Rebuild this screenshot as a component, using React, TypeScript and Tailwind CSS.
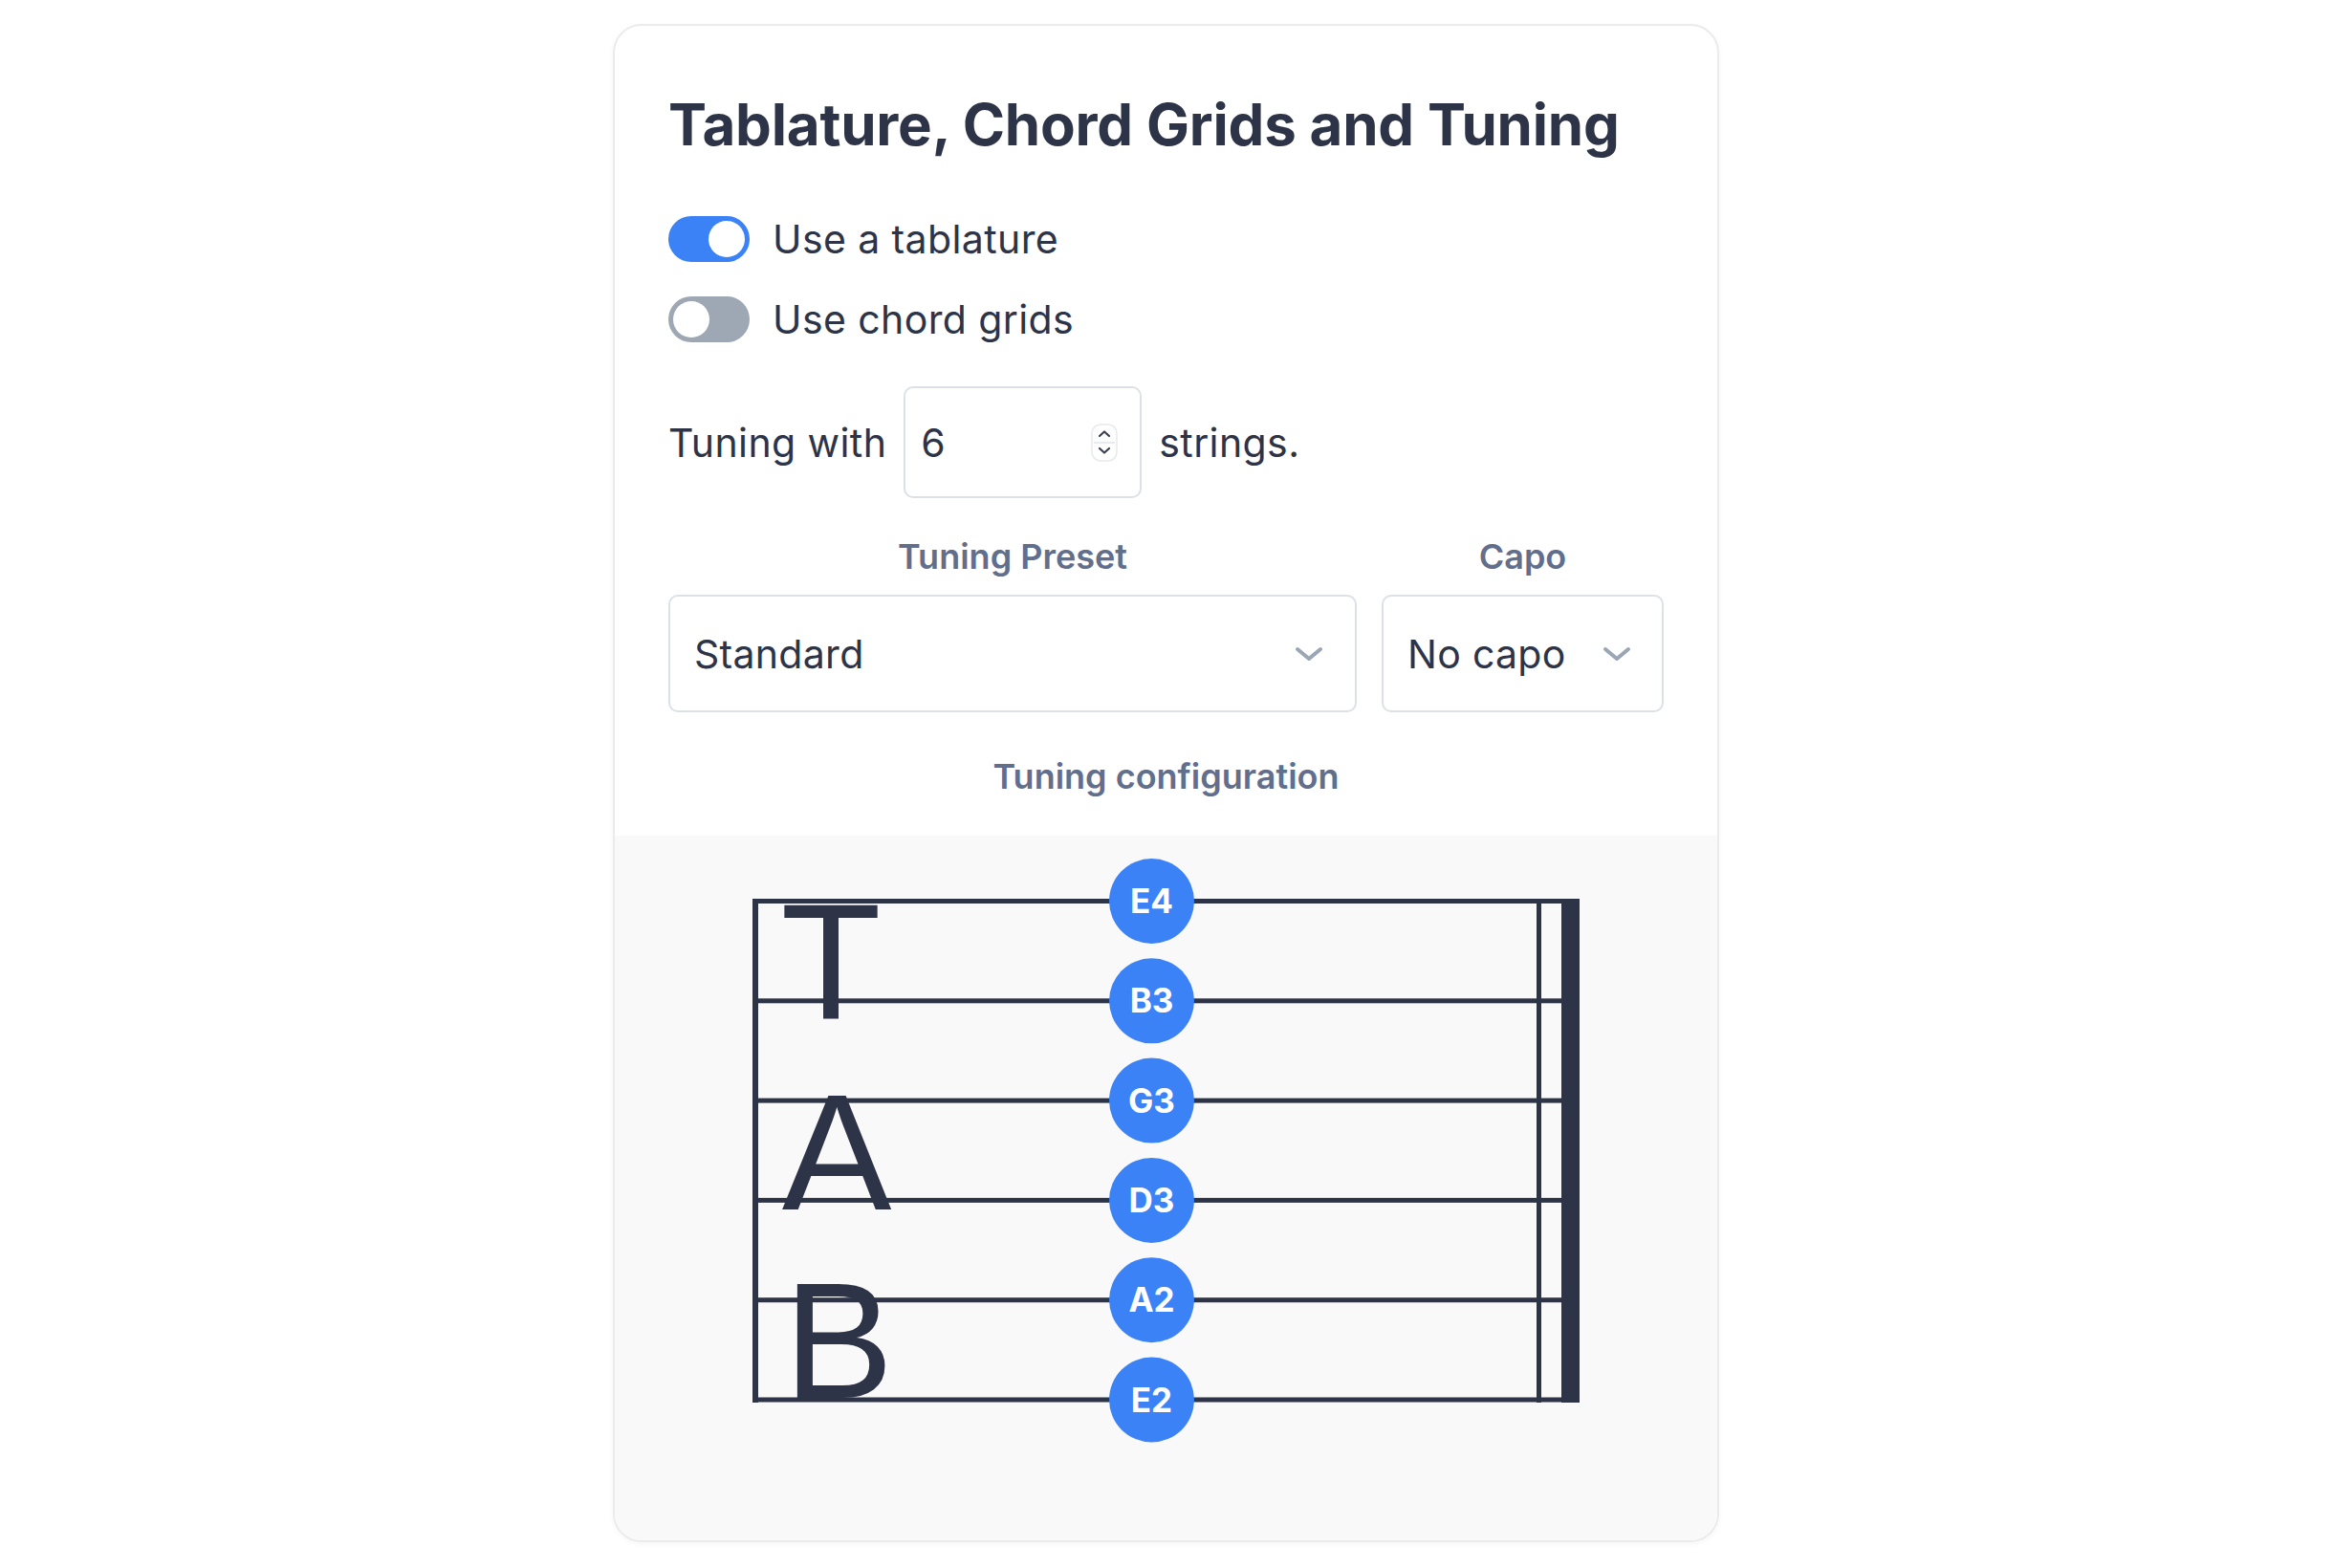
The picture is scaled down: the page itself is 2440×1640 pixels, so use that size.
import { useState } from "react";

const strings = ["E4", "B3", "G3", "D3", "A2", "E2"];

function Toggle({ on }: { on: boolean }) {
    return (
        <div
            className={`flex h-[48px] w-[85px] shrink-0 items-center rounded-full p-[5px] ${on ? "justify-end bg-[#3b82f6]" : "justify-start bg-[#9ea8b4]"}`}
        >
            <div className="h-[38px] w-[38px] rounded-full bg-white" />
        </div>
    );
}

function Chevron() {
    return (
        <svg width="30" height="16" viewBox="0 0 30 16" fill="none">
            <polyline points="3,3 15,13 27,3" stroke="#9aa5b5" strokeWidth="4" strokeLinecap="round" strokeLinejoin="round" />
        </svg>
    );
}

function Spinner() {
    return (
        <svg width="28" height="40" viewBox="0 0 28 40" fill="none">
            <rect x="1" y="1" width="26" height="38" rx="9" fill="#ffffff" stroke="#e6e9ed" strokeWidth="1.5" />
            <line x1="3" y1="20" x2="25" y2="20" stroke="#e2e6ea" strokeWidth="1.5" />
            <polyline points="9,13 14,8.5 19,13" stroke="#3a4050" strokeWidth="2.2" strokeLinecap="round" strokeLinejoin="round" />
            <polyline points="9,26 14,30.5 19,26" stroke="#3a4050" strokeWidth="2.2" strokeLinecap="round" strokeLinejoin="round" />
        </svg>
    );
}

function TabStaff() {
    const lineY = strings.map((_, i) => 68.5 + i * 104.3);
    const ink = "#2e3447";
    return (
        <svg width="1153" height="737" viewBox="0 0 1153 737">
            {lineY.map((y) => (
                <rect key={y} x={144} y={y - 2.5} width={865} height={5} fill={ink} />
            ))}
            <rect x={144} y={66} width={6} height={527} fill={ink} />
            <rect x={964} y={66} width={5} height={527} fill={ink} />
            <rect x={990} y={66} width={19} height={527} fill={ink} />
            <g fill={ink} fontFamily="'Liberation Sans', Arial, sans-serif" fontSize="172" textAnchor="middle">
                <text x={226} y={192}>T</text>
                <text x={232} y={391}>A</text>
                <text x={234} y={588}>B</text>
            </g>
            {strings.map((s, i) => (
                <g key={s}>
                    <circle cx={561.5} cy={lineY[i]} r={44.5} fill="#3b82f6" />
                    <text
                        x={561.5}
                        y={lineY[i] + 12.6}
                        fill="#ffffff"
                        fontFamily="Inter, 'Noto Sans', sans-serif"
                        fontWeight="700"
                        fontSize="35"
                        textAnchor="middle"
                    >
                        {s}
                    </text>
                </g>
            ))}
        </svg>
    );
}

export default function App() {
    const [tab] = useState(true);
    const [grids] = useState(false);

    return (
        <div className="min-h-screen bg-white pt-[25px] font-['Inter',_'Noto_Sans',_sans-serif] text-[#2e3447]">
            <div className="ml-[641px] w-[1157px] overflow-hidden rounded-[30px] border-2 border-[#ebebeb] bg-white shadow-[0_2px_6px_rgba(0,0,0,0.04)]">
                <div className="pt-[67px] pb-[38px] pl-[56px] pr-[56px]">
                    <h1 className="text-[60px] font-bold leading-[72px] tracking-[-0.2px]">
                        Tablature, Chord Grids and Tuning
                    </h1>

                    <div className="mt-[60px] flex flex-col gap-[36px]">
                        <div className="flex items-center gap-[24px]">
                            <Toggle on={tab} />
                            <span className="text-[41px] leading-[48px] tracking-[0.4px]">Use a tablature</span>
                        </div>
                        <div className="flex items-center gap-[24px]">
                            <Toggle on={grids} />
                            <span className="text-[41px] leading-[48px] tracking-[0.4px]">Use chord grids</span>
                        </div>
                    </div>

                    <div className="mt-[46px] flex items-center gap-[18px] text-[41px] leading-[48px] tracking-[0.4px]">
                        <span>Tuning with</span>
                        <div className="flex h-[117px] w-[249px] items-center justify-between rounded-[10px] border-2 border-[#dce1e7] pl-[16px] pr-[23px]">
                            <span>6</span>
                            <Spinner />
                        </div>
                        <span>strings.</span>
                    </div>

                    <div className="mt-[37px] flex gap-[26px]">
                        <div className="flex w-[720px] flex-col items-center gap-[16px]">
                            <div className="text-[36px] font-semibold leading-[48px] text-[#616e8c]">Tuning Preset</div>
                            <div className="flex h-[123px] w-full items-center justify-between rounded-[10px] border-2 border-[#dce1e7] pl-[25px] pr-[33px]">
                                <span className="text-[41px] leading-[48px] tracking-[0.3px]">Standard</span>
                                <Chevron />
                            </div>
                        </div>
                        <div className="flex w-[295px] flex-col items-center gap-[16px]">
                            <div className="text-[36px] font-semibold leading-[48px] text-[#616e8c]">Capo</div>
                            <div className="flex h-[123px] w-full items-center justify-between rounded-[10px] border-2 border-[#dce1e7] pl-[25px] pr-[32px]">
                                <span className="text-[41px] leading-[48px] tracking-[0.3px]">No capo</span>
                                <Chevron />
                            </div>
                        </div>
                    </div>

                    <div className="mt-[43px] text-center text-[36px] font-semibold leading-[48px] text-[#616e8c]">
                        Tuning configuration
                    </div>
                </div>

                <div className="h-[737px] bg-[#f9f9f9]">
                    <TabStaff />
                </div>
            </div>
        </div>
    );
}
